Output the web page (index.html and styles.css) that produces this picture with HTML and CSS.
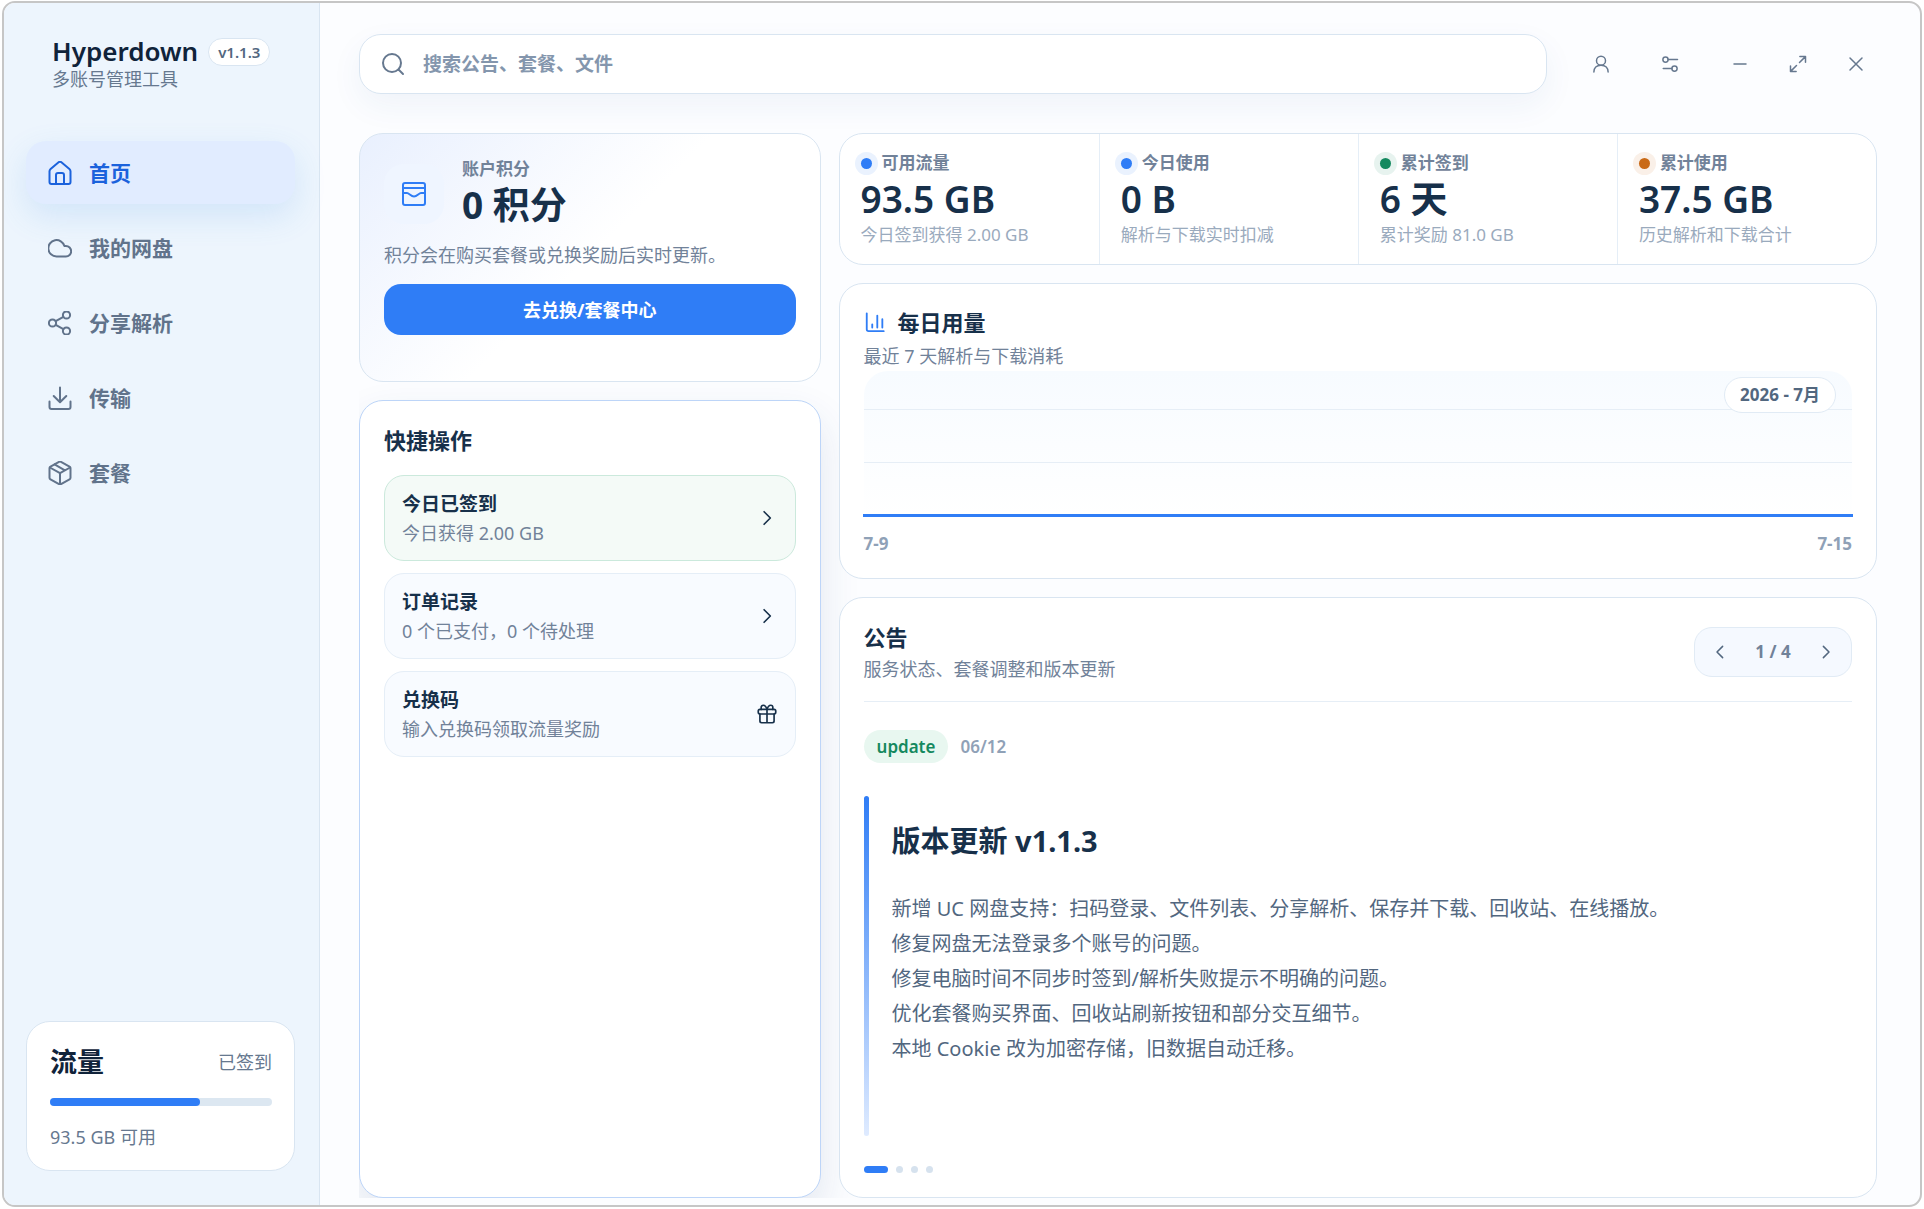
FILE: index.html
```html
<!doctype html>
<html lang="zh-CN">
<head>
<meta charset="utf-8">
<meta name="viewport" content="width=device-width, initial-scale=1">
<title>Hyperdown</title>
<link rel="stylesheet" href="styles.css">
</head>

<body>
<div class="window">
	<aside class="sidebar">
		<div class="brand">
			<div class="brand-row">
				<h1>Hyperdown</h1>
				<span class="version">v1.1.3</span>
			</div>
			<p>多账号管理工具</p>
		</div>
		<nav class="nav">
			<a class="active" href="#home">
				<svg class="icon" viewBox="0 0 24 24"><path d="M1.5 10.2c0-.9.4-1.7 1.1-2.3l8-6.6a2.2 2.2 0 0 1 2.8 0l8 6.6c.7.6 1.1 1.4 1.1 2.3V21a2 2 0 0 1-2 2h-17a2 2 0 0 1-2-2z"/><path d="M8 23v-9a2 2 0 0 1 2-2h4a2 2 0 0 1 2 2v9"/></svg>
				首页
			</a>
			<a href="#drive">
				<svg class="icon" viewBox="0 0 24 24"><path d="M8.5 20.5a8.2 8.2 0 1 1 7.9-10.5h1.5a5.25 5.25 0 1 1 0 10.5z"/></svg>
				我的网盘
			</a>
			<a href="#share">
				<svg class="icon" viewBox="0 0 24 24"><circle cx="18.5" cy="4" r="3.6"/><circle cx="4.5" cy="12" r="3.6"/><circle cx="18.5" cy="20" r="3.6"/><path d="M7.7 10.2l7.7-4.4M7.7 13.8l7.7 4.4"/></svg>
				分享解析
			</a>
			<a href="#transfer">
				<svg class="icon" viewBox="0 0 24 24"><path d="M12 1.5v14.5M5.7 10l6.3 6.3L18.3 10M1.5 15.5V21a2 2 0 0 0 2 2h17a2 2 0 0 0 2-2v-5.5"/></svg>
				传输
			</a>
			<a href="#plan">
				<svg class="icon" viewBox="0 0 24 24"><path d="M11 .9 2.5 5.6a2 2 0 0 0-1 1.7v9.4a2 2 0 0 0 1 1.7l8.5 4.7a2 2 0 0 0 2 0l8.5-4.7a2 2 0 0 0 1-1.7V7.3a2 2 0 0 0-1-1.7L13 .9a2 2 0 0 0-2 0z"/><path d="M1.9 6.5 12 12.2l10.1-5.7M12 12.2v11.1M6.6 3.4l10.3 5.9"/></svg>
				套餐
			</a>
		</nav>
		<section class="traffic">
			<div class="traffic-head">
				<h2>流量</h2>
				<span>已签到</span>
			</div>
			<div class="progress"><span style="width:67.5%"></span></div>
			<p>93.5 GB 可用</p>
		</section>
	</aside>

	<main class="main">
		<header class="topbar">
			<label class="search">
				<svg class="icon" viewBox="0 0 24 24"><circle cx="11" cy="11" r="9"/><path d="M17.5 17.5l4.5 4.5"/></svg>
				<input type="search" aria-label="搜索" placeholder="搜索公告、套餐、文件">
			</label>
			<div class="tools">
				<button type="button" aria-label="账户"><svg viewBox="0 0 24 24"><circle cx="12" cy="7.5" r="6"/><path d="M2.500 22.500c0-5.300 3.500-9 9.500-9s9.500 3.700 9.500 9"/></svg></button>
				<button type="button" aria-label="设置"><svg viewBox="0 0 24 24"><circle cx="6" cy="6" r="3.5"/><path d="M9.5 6H22M3 18h11.5"/><circle cx="18" cy="18" r="3.5"/></svg></button>
			</div>
			<div class="win-btns">
				<button type="button" aria-label="最小化"><svg viewBox="0 0 24 24"><path d="M4 12h16"/></svg></button>
				<button type="button" aria-label="最大化"><svg viewBox="0 0 24 24"><path d="M14.5 2H22v7.500M21.500 2.500 14 10M9.500 22H2v-7.500M2.500 21.500 10 14"/></svg></button>
				<button type="button" aria-label="关闭"><svg viewBox="0 0 24 24"><path d="M4 4l16 16M20 4 4 20"/></svg></button>
			</div>
		</header>

		<div class="content">
			<div class="col">
				<section class="card points">
					<div class="points-head">
						<span class="points-icon">
							<svg class="icon" viewBox="0 0 24 24"><rect x="1" y="1" width="22" height="22" rx="2"/><path d="M1 6h22M1 11h4c2 0 4 3.500 7 3.500s5-3.500 7-3.500h4"/></svg>
						</span>
						<div>
							<h3>账户积分</h3>
							<strong>0 积分</strong>
						</div>
					</div>
					<p>积分会在购买套餐或兑换奖励后实时更新。</p>
					<button class="primary" type="button">去兑换/套餐中心</button>
				</section>

				<section class="card quick">
					<h2>快捷操作</h2>
					<button class="action done" type="button">
						<span><b>今日已签到</b><small>今日获得 2.00 GB</small></span>
						<svg viewBox="0 0 24 24"><path d="M8.5 4.5 16 12l-7.5 7.5"/></svg>
					</button>
					<button class="action" type="button">
						<span><b>订单记录</b><small>0 个已支付，0 个待处理</small></span>
						<svg viewBox="0 0 24 24"><path d="M8.5 4.5 16 12l-7.5 7.5"/></svg>
					</button>
					<button class="action" type="button">
						<span><b>兑换码</b><small>输入兑换码领取流量奖励</small></span>
						<svg viewBox="0 0 24 24"><rect x="1.5" y="6.5" width="21" height="5.5" rx="2"/><path d="M3.500 12v8.500a2 2 0 0 0 2 2h13a2 2 0 0 0 2-2V12M12 6.500v16M12 6.500C11 3 9.500 1.500 7.500 1.500a2.500 2.500 0 0 0-2.500 2.500v2.500M12 6.500c1-3.500 2.500-5 4.500-5a2.500 2.500 0 0 1 2.500 2.500v2.500"/></svg>
					</button>
				</section>
			</div>

			<div class="col">
				<section class="card stats">
					<div class="stat">
						<h3><i class="dot"></i>可用流量</h3>
						<strong>93.5 GB</strong>
						<p>今日签到获得 2.00 GB</p>
					</div>
					<div class="stat">
						<h3><i class="dot"></i>今日使用</h3>
						<strong>0 B</strong>
						<p>解析与下载实时扣减</p>
					</div>
					<div class="stat">
						<h3><i class="dot green"></i>累计签到</h3>
						<strong>6 天</strong>
						<p>累计奖励 81.0 GB</p>
					</div>
					<div class="stat">
						<h3><i class="dot orange"></i>累计使用</h3>
						<strong>37.5 GB</strong>
						<p>历史解析和下载合计</p>
					</div>
				</section>

				<section class="card usage">
					<h2><svg viewBox="0 0 24 24"><path d="M3 2.500V20a2 2 0 0 0 2 2h16.500M9 14.500V18M14.500 5v13M20 9v9"/></svg>每日用量</h2>
					<p class="sub">最近 7 天解析与下载消耗</p>
					<div class="chart">
						<div class="grid-line"></div>
						<div class="grid-line"></div>
						<div class="data-line"></div>
						<span class="month">2026 - 7月</span>
					</div>
					<div class="axis"><span>7-9</span><span>7-15</span></div>
				</section>

				<section class="card notice">
					<div class="notice-head">
						<div>
							<h2>公告</h2>
							<p class="sub">服务状态、套餐调整和版本更新</p>
						</div>
						<div class="pager">
							<button type="button" aria-label="上一条"><svg viewBox="0 0 24 24"><path d="M15.5 4.5 8 12l7.5 7.5"/></svg></button>
							<span>1 / 4</span>
							<button type="button" aria-label="下一条"><svg viewBox="0 0 24 24"><path d="M8.5 4.5 16 12l-7.5 7.5"/></svg></button>
						</div>
					</div>
					<div class="meta">
						<span class="tag">update</span>
						<time>06/12</time>
					</div>
					<article class="article">
						<h3>版本更新 v1.1.3</h3>
						<p>新增 UC 网盘支持：扫码登录、文件列表、分享解析、保存并下载、回收站、在线播放。</p>
						<p>修复网盘无法登录多个账号的问题。</p>
						<p>修复电脑时间不同步时签到/解析失败提示不明确的问题。</p>
						<p>优化套餐购买界面、回收站刷新按钮和部分交互细节。</p>
						<p>本地 Cookie 改为加密存储，旧数据自动迁移。</p>
					</article>
					<div class="dots"><i class="on"></i><i></i><i></i><i></i></div>
				</section>
			</div>
		</div>
	</main>
</div>
</body>
</html>
```
FILE: styles.css
```css
*{
	box-sizing:border-box;
	margin:0;
	padding:0;
	}
body{
	background:#fff;
	color:#17304a;
	font-family:"Noto Sans","Noto Sans CJK SC",sans-serif;
	font-size:18px;
	line-height:24px;
	}
button,input{
	font:inherit;
	color:inherit;
	border:0;
	background:none;
	}
button{
	cursor:pointer;
	}
a{
	color:inherit;
	text-decoration:none;
	}
svg{
	display:block;
	flex:none;
	fill:none;
	stroke:currentColor;
	stroke-width:2;
	stroke-linecap:round;
	stroke-linejoin:round;
	}
.icon{
	width:24px;
	height:24px;
	}
.window{
	display:flex;
	min-height:calc(100vh - 3px);
	margin:1px 2px 2px;
	border:2px solid #c6c6c6;
	border-radius:13px;
	background:#fcfdff;
	overflow:hidden;
	}

/* 侧边栏 */
.sidebar{
	display:flex;
	flex-direction:column;
	width:316px;
	flex:none;
	padding:33px 24px 34px 22px;
	background:#edf5fd;
	border-right:1px solid #d9e5f1;
	}
.brand{
	padding:0 26px;
	color:#66788f;
	}
.brand-row{
	display:flex;
	align-items:center;
	gap:10px;
	}
.brand h1{
	color:#10233a;
	font-size:26px;
	line-height:31px;
	font-weight:600;
	}
.version{
	height:28px;
	padding:0 9px;
	border:1px solid #d9e5f1;
	border-radius:14px;
	background:#fff;
	color:#52677f;
	font-size:15px;
	line-height:26px;
	font-weight:600;
	}
.nav{
	display:flex;
	flex-direction:column;
	gap:12px;
	margin-top:50px;
	}
.nav a{
	display:flex;
	align-items:center;
	gap:17px;
	height:63px;
	padding:0 22px;
	border-radius:20px;
	color:#61738b;
	font-size:21px;
	font-weight:700;
	}
.nav .active{
	background:#e1ecff;
	color:#1b62dc;
	box-shadow:0 12px 32px rgba(70,150,230,.16);
	}
.traffic{
	margin-top:auto;
	padding:23px 22px 21px 23px;
	border:1px solid #d9e5f1;
	border-radius:24px;
	background:#fff;
	color:#66788f;
	}
.traffic-head{
	display:flex;
	justify-content:space-between;
	align-items:center;
	}
.traffic h2{
	color:#10233a;
	font-size:27px;
	line-height:34px;
	}
.progress{
	height:8px;
	margin:19px 0;
	border-radius:4px;
	background:#dce7f1;
	}
.progress span{
	display:block;
	height:8px;
	border-radius:4px;
	background:#2f7df6;
	}

/* 顶栏 */
.main{
	display:flex;
	flex-direction:column;
	flex:1;
	min-width:0;
	padding:31px 43px 7px 39px;
	}
.topbar{
	display:flex;
	align-items:center;
	}
.search{
	display:flex;
	align-items:center;
	flex:1;
	gap:18px;
	height:60px;
	padding:0 21px;
	border:1px solid #d9e5f1;
	border-radius:22px;
	background:#fff;
	color:#66788f;
	box-shadow:0 12px 32px rgba(30,90,150,.06);
	}
.search input{
	flex:1;
	outline:0;
	font-size:19px;
	font-weight:700;
	}
.search input::placeholder{
	color:#8496ad;
	}
.tools,.win-btns{
	display:flex;
	color:#66788f;
	}
.tools{
	gap:21px;
	margin:0 16px 0 30px;
	}
.win-btns{
	gap:10px;
	margin:0 -3px 0 6px;
	}
.tools button,.win-btns button{
	display:flex;
	align-items:center;
	justify-content:center;
	width:48px;
	height:48px;
	}
.tools svg,.win-btns svg{
	width:18px;
	height:18px;
	}

/* 内容 */
.content{
	display:grid;
	grid-template-columns:4fr 9fr;
	gap:18px;
	flex:1;
	margin-top:39px;
	overflow:hidden;
	}
.col{
	display:flex;
	flex-direction:column;
	gap:18px;
	min-width:0;
	}
.card{
	border:1px solid #d9e5f1;
	border-radius:24px;
	background:#fff;
	}
.card h2{
	font-size:22px;
	line-height:30px;
	}
.points{
	padding:24px 24px 46px;
	background:linear-gradient(135deg,#e9f0fe 0%,#fff 50%);
	color:#718299;
	}
.points-head{
	display:flex;
	align-items:center;
	gap:18px;
	}
.points-icon{
	display:flex;
	align-items:center;
	justify-content:center;
	width:60px;
	height:60px;
	border-radius:20px;
	background:#eff5ff;
	color:#2f7df6;
	}
.points h3{
	font-size:17px;
	line-height:22px;
	}
.points strong{
	display:block;
	color:#17304a;
	font-size:37px;
	line-height:50px;
	}
.points p{
	margin:13px 0 17px;
	}
.primary{
	display:block;
	width:100%;
	height:51px;
	border-radius:17px;
	background:#2f7df6;
	color:#fff;
	font-weight:700;
	}
.quick{
	display:flex;
	flex-direction:column;
	gap:12px;
	flex:1;
	padding:24px;
	border-color:#bdd5f8;
	box-shadow:0 18px 40px rgba(30,64,120,.12);
	}
.quick h2{
	margin-bottom:8px;
	}
.action{
	display:flex;
	align-items:center;
	justify-content:space-between;
	height:86px;
	padding:0 18px 0 17px;
	border:1px solid #e5eef7;
	border-radius:20px;
	background:#f8fbff;
	text-align:left;
	}
.action.done{
	border-color:#cbe9dc;
	background:#f4faf7;
	}
.action b{
	display:block;
	font-size:19px;
	line-height:29px;
	}
.action small{
	display:block;
	color:#718299;
	font-size:18px;
	line-height:28px;
	}
.action svg{
	width:20px;
	height:20px;
	}

/* 统计 */
.stats{
	display:grid;
	grid-template-columns:repeat(4,1fr);
	}
.stat{
	padding:17px 20px 17px 21px;
	}
.stat + .stat{
	border-left:1px solid #e5eef7;
	}
.stat h3{
	display:flex;
	align-items:center;
	gap:10px;
	color:#718299;
	font-size:17px;
	line-height:24px;
	}
.dot{
	width:11px;
	height:11px;
	border-radius:50%;
	background:#2f7df6;
	box-shadow:0 0 0 6px #eaf2fe;
	}
.dot.green{
	background:#15895f;
	box-shadow:0 0 0 6px #e7f3ef;
	}
.dot.orange{
	background:#c96a17;
	box-shadow:0 0 0 6px #faf0e8;
	}
.stat strong{
	display:block;
	font-size:37px;
	line-height:48px;
	font-weight:600;
	}
.stat p{
	color:#9aaabd;
	font-size:17px;
	line-height:24px;
	}

/* 每日用量 */
.usage{
	padding:23px 24px 22px;
	}
.usage h2{
	display:flex;
	align-items:center;
	gap:12px;
	}
.usage svg{
	width:22px;
	height:22px;
	color:#2f7df6;
	}
.sub{
	margin-top:5px;
	color:#718299;
	}
.usage .sub{
	margin:7px 0 3px;
	}
.chart{
	position:relative;
	height:148px;
	padding-top:38px;
	border-radius:24px 24px 0 0;
	background:linear-gradient(#f7fbff,#fff);
	}
.grid-line{
	height:53px;
	border-top:1px solid #e6eef6;
	}
.data-line{
	height:3px;
	margin:-1px;
	background:#2f7df6;
	}
.month{
	position:absolute;
	top:6px;
	right:16px;
	padding:0 15px;
	border:1px solid #e1ebf5;
	border-radius:18px;
	background:#fff;
	color:#52677f;
	font-size:17px;
	line-height:34px;
	font-weight:700;
	}
.axis{
	display:flex;
	justify-content:space-between;
	margin-top:13px;
	color:#8fa1b7;
	font-size:17px;
	font-weight:700;
	}

/* 公告 */
.notice{
	display:flex;
	flex-direction:column;
	flex:1;
	padding:24px;
	}
.notice-head{
	display:flex;
	justify-content:space-between;
	align-items:center;
	padding-bottom:20px;
	border-bottom:1px solid #e6eef6;
	}
.pager{
	display:flex;
	align-items:center;
	height:50px;
	padding:0 4px;
	border:1px solid #e1ebf5;
	border-radius:18px;
	background:#f5f9ff;
	color:#52677f;
	}
.pager button{
	display:flex;
	align-items:center;
	justify-content:center;
	width:42px;
	height:42px;
	}
.pager svg{
	width:18px;
	height:18px;
	}
.pager span{
	min-width:64px;
	color:#718299;
	font-size:17px;
	font-weight:700;
	text-align:center;
	}
.meta{
	display:flex;
	align-items:center;
	gap:12px;
	margin-top:28px;
	color:#8fa1b7;
	font-size:17px;
	font-weight:600;
	}
.tag{
	padding:0 13px;
	border-radius:17px;
	background:#e8f7f0;
	color:#15895f;
	line-height:33px;
	}
.article{
	position:relative;
	flex:1;
	margin:33px 0 30px;
	padding:25px 0 40px 28px;
	color:#52677f;
	font-size:20px;
	line-height:35px;
	}
.article::before{
	content:"";
	position:absolute;
	top:0;
	bottom:0;
	left:0;
	width:5px;
	border-radius:3px;
	background:linear-gradient(#2f7df6,#dfebff);
	}
.article h3{
	margin-bottom:30px;
	color:#17304a;
	font-size:29px;
	line-height:40px;
	}
.dots{
	display:flex;
	gap:8px;
	}
.dots i{
	width:7px;
	height:7px;
	border-radius:4px;
	background:#d6e2ee;
	}
.dots .on{
	width:24px;
	background:#2f7df6;
	}
```
